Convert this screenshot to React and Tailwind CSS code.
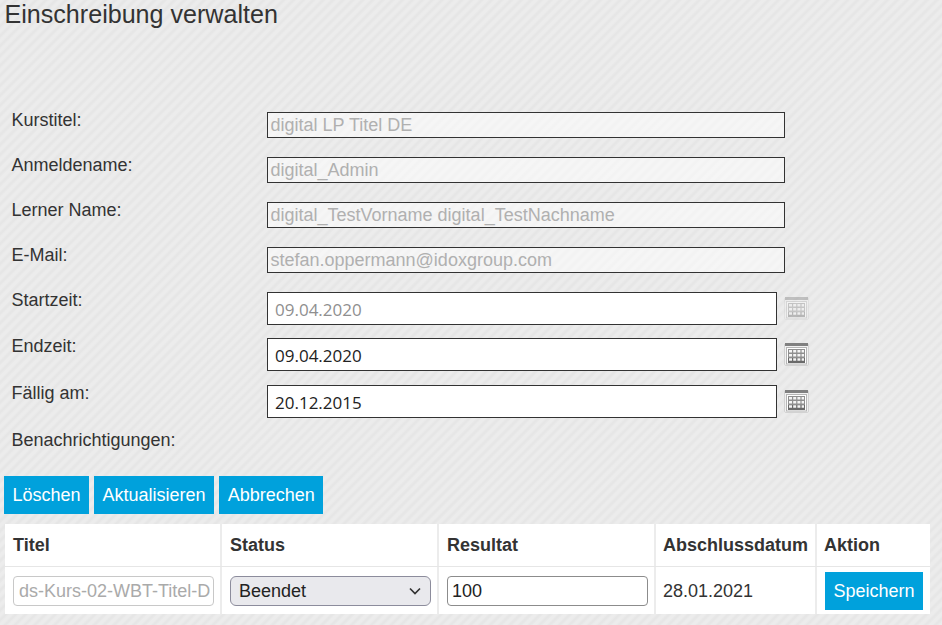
const Calendar = ({ faded }) => (
  <svg width="25" height="23" viewBox="0 0 25 23" className={faded ? "ml-[7px] opacity-40 blur-[0.3px]" : "ml-[7px] blur-[0.3px]"}>
    <rect x="0.5" y="0.5" width="24" height="22" rx="1.5" fill="#f1f1f1" stroke="#d2d2d2" />
    <rect x="1" y="0" width="23" height="3" fill="#808080" />
    <rect x="2.5" y="4.5" width="20" height="16.5" fill="#fff" stroke="#b5b5b5" />
    <rect x="4" y="6" width="17" height="14" fill="#8f8f8f" />
    <rect x="4" y="15" width="17" height="5" fill="#6a6a6a" />
    <path d="M5 7h3v2.6H5zM9.2 7h3v2.6H9.2zM13.4 7h3v2.6h-3zM17.6 7h2.4v2.6h-2.4zM5 11h3v2.6H5zM9.2 11h3v2.6H9.2zM13.4 11h3v2.6h-3zM17.6 11h2.4v2.6h-2.4zM5 15.2h3v2.6H5zM9.2 15.2h3v2.6H9.2zM13.4 15.2h3v2.6h-3zM17.6 15.2h2.4v2.6h-2.4z" fill="#f4f4f4" />
  </svg>
);

const readonlyRows = [
  ["Kurstitel:", "digital LP Titel DE"],
  ["Anmeldename:", "digital_Admin"],
  ["Lerner Name:", "digital_TestVorname digital_TestNachname"],
  ["E-Mail:", "stefan.oppermann@idoxgroup.com"],
];

const dateRows = [
  ["Startzeit:", "09.04.2020", true],
  ["Endzeit:", "09.04.2020", false],
  ["Fällig am:", "20.12.2015", false],
];

const Btn = ({ children }) => (
  <button className="h-[38px] bg-[#00a1dc] text-white text-lg px-[8.5px]">{children}</button>
);

export default function App() {
  return (
    <div className="h-[625px] w-[942px] overflow-hidden font-['Liberation_Sans',sans-serif] text-[#333] bg-[repeating-linear-gradient(135deg,#ececec_0px,#ececec_2px,#e6e6e6_4px,#e6e6e6_5px,#ececec_7px)]">
      <h1 className="pl-[4.5px] h-[112px] text-[25.1px] leading-[28px]">Einschreibung verwalten</h1>

      <div className="flex flex-col gap-[19px]">
        {readonlyRows.map(([label, value]) => (
          <div key={label} className="flex h-[26px]">
            <label className="w-[267px] pl-[11.5px] text-lg leading-[16px]">{label}</label>
            <div className="w-[518px] h-[26px] border border-[#333] bg-white/50 pl-[2.5px] text-lg leading-[24px] text-[#b0b0b0]">{value}</div>
          </div>
        ))}
      </div>

      <div className="mt-[19px] flex flex-col">
        {dateRows.map(([label, value, faded], i) => (
          <div key={label} className={"flex items-center h-[33px] " + (i === 1 ? "mt-[13px]" : i === 2 ? "mt-[14px]" : "")}>
            <label className="w-[267px] pl-[11.5px] text-lg leading-[16px] self-start">{label}</label>
            <div className={"w-[510px] h-[33px] border border-[#333] bg-white pl-[7px] font-['Open_Sans',sans-serif] text-[17px] leading-[33px] " + (faded ? "text-[#8f8f8f]" : "text-[#222]")}>{value}</div>
            <Calendar faded={faded} />
          </div>
        ))}
      </div>

      <div className="mt-[13px] pl-[11.5px] text-lg leading-[18px]">Benachrichtigungen:</div>

      <div className="mt-[27px] ml-1 flex gap-[5px]">
        <Btn>Löschen</Btn>
        <Btn>Aktualisieren</Btn>
        <Btn>Abbrechen</Btn>
      </div>

      <div className="mt-[10px] ml-[5px] w-[925px] bg-white">
        <div className="grid grid-cols-[217px_217px_217px_161px_1fr] h-[43px] border-b border-[#e6e6e6] text-lg font-bold items-center">
          <div className="h-full flex items-center pl-2 border-r-2 border-[#ececec]">Titel</div>
          <div className="h-full flex items-center pl-2 border-r-2 border-[#ececec]">Status</div>
          <div className="h-full flex items-center pl-2 border-r-2 border-[#ececec]">Resultat</div>
          <div className="h-full flex items-center pl-[7px] border-r-2 border-[#ececec]">Abschlussdatum</div>
          <div className="h-full flex items-center pl-[7px]">Aktion</div>
        </div>
        <div className="grid grid-cols-[217px_217px_217px_161px_1fr] h-[47px] text-lg items-center">
          <div className="h-full flex items-center pl-2 border-r-2 border-[#ececec]">
            <div className="w-[201px] h-[30px] overflow-hidden whitespace-nowrap rounded border border-[#c8c8c8] pl-[5px] leading-[28px] text-[#aaa]">ds-Kurs-02-WBT-Titel-D</div>
          </div>
          <div className="h-full flex items-center pl-2 border-r-2 border-[#ececec]">
            <div className="w-[201px] h-[30px] flex items-center justify-between rounded-md border border-[#8c8c9c] bg-[#e9e9ed] pl-2 pr-[9px] text-[#222]">
              Beendet
              <svg width="12" height="8" viewBox="0 0 12 8" fill="none" stroke="#333" strokeWidth="1.7">
                <path d="M1 1.5 6 6.5l5-5" />
              </svg>
            </div>
          </div>
          <div className="h-full flex items-center pl-2 border-r-2 border-[#ececec]">
            <div className="w-[201px] h-[30px] rounded border border-[#8c8c8c] pl-[4px] leading-[28px] text-[#222]">100</div>
          </div>
          <div className="h-full flex items-center pl-[7px] border-r-2 border-[#ececec]">28.01.2021</div>
          <div className="h-full flex items-center pl-2">
            <Btn>Speichern</Btn>
          </div>
        </div>
      </div>
    </div>
  );
}
